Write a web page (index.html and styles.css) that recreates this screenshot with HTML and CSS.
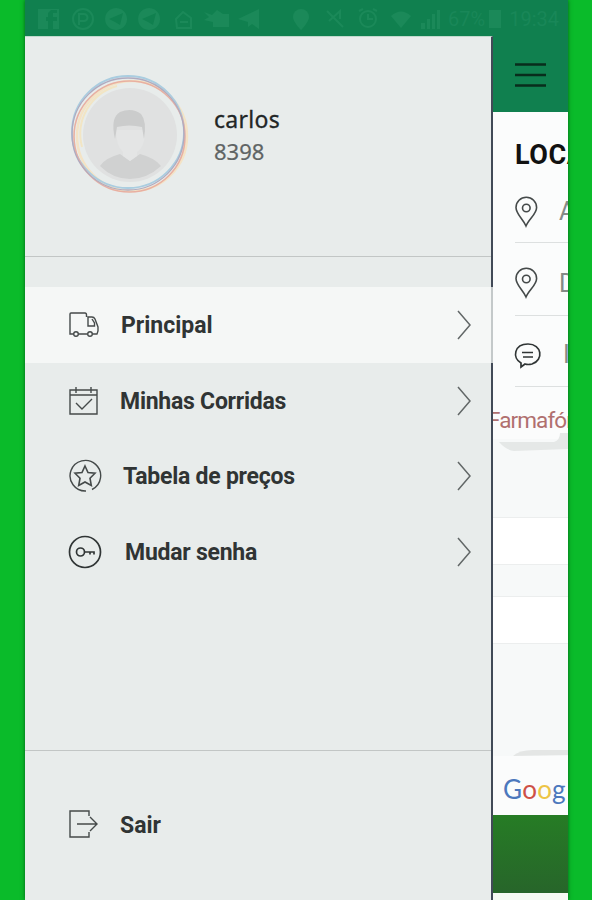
FILE: index.html
```html
<!DOCTYPE html>
<html lang="pt-BR">

<head>
    <meta charset="utf-8">
    <title>Principal</title>
    <link rel="stylesheet" href="styles.css">
</head>

<body>
    <div class="phone">
        <div class="status-bar">
            <svg class="status-icons" width="226" height="24" viewBox="0 0 226 24">
                <path d="M0 2h21v20h-6v-8h4v-4h-4V6h4V3h-6l-3 3v4H8v4h2v8H0z" />
                <circle class="ring" cx="45" cy="12" r="10" />
                <path class="ring" d="M41 18V7h5a3 3 0 0 1 0 7h-4" />
                <path fill-rule="evenodd" d="M78 1a11 11 0 1 0 .1 0zM71 12l14-6-3 12-5-3z" />
                <path fill-rule="evenodd" d="M111 1a11 11 0 1 0 .1 0zM104 12l14-6-3 12-5-3z" />
                <path class="ring" d="M138 12l7-7 8 6v10h-14zM142 15h8" />
                <path d="M166 5l8 3 5-5 6 4h6v13h-16v-5l-9-2 5-3z" />
                <path d="M200 12l21-10v20l-7-5-4 3v-5z" />
            </svg>
            <div class="status-right">
                <svg class="status-icons status-icons-right" width="150" height="24" viewBox="0 0 150 24">
                    <path d="M3 2a8 8 0 0 0-8 8c0 5 8 13 8 13s8-8 8-13a8 8 0 0 0-8-8z" />
                    <path class="ring" d="M29 4l16 16M31 14l11-10v8" />
                    <circle class="ring" cx="70" cy="12" r="8" />
                    <path class="ring" d="M61 4l4-2M79 4l-4-2M70 7v5h5" />
                    <path d="M93 9q10-9 20 0l-10 12z" />
                    <path d="M123 16h4v6h-4zM129 12h3v10h-3zM134 7h3v15h-3zM139 3h3v19h-3z" />
                </svg>
                <span>67%</span>
                <span class="battery"></span>
                <span>19:34</span>
            </div>
        </div>

        <div class="screen">
            <nav class="drawer">
                <div class="profile">
                    <svg class="avatar" width="124" height="124" viewBox="0 0 124 124">
                        <circle cx="63" cy="62" r="47" fill="#e0e1e1" />
                        <path d="M33 93q5-8 20-12l10 7 10-7q15 4 21 12-14 13-31 13T33 93z" fill="#d0d1d1" />
                        <path d="M49 57q0 16 7 22v4l7 5 7-5v-4q8-5 8-22z" fill="#e4e5e5" />
                        <path d="M48 66q-5-21 5-27 12-5 21 2 6 7 3 25l-2-12q-13-3-25 0z" fill="#cbcccc" />
                        <circle cx="65" cy="63" r="55" fill="none" stroke="#f4e3c5" stroke-width="2.5" />
                        <circle cx="61" cy="59" r="56" fill="none" stroke="#aacde0" stroke-width="1.8" />
                        <circle cx="62.500" cy="63.500" r="55.500" fill="none" stroke="#e8b0a2" stroke-width="1.6" />
                        <circle cx="61" cy="61" r="56" fill="none" stroke="#b0abc0" stroke-width="1.300" />
                        <path d="M15 74a50 50 0 0 1 35-61" fill="none" stroke="#f2e5c4" stroke-width="2" />
                    </svg>
                    <div class="profile-text">
                        <div class="name">carlos</div>
                        <div class="number">8398</div>
                    </div>
                </div>

                <ul class="menu">
                    <li class="menu-item active">
                        <svg class="icon" width="34" height="34" viewBox="0 0 34 34">
                            <path d="M5.500 26H2V6q0-1 1-1h14q1.500 0 1.500 2v2M10.500 26h9M24.500 26H29q1.500-3 1-7l-3-8q-1-2-3-2h-4v9h6.500v-3L24 11" />
                            <circle cx="8" cy="26" r="2.300" />
                            <circle cx="22" cy="26" r="2.300" />
                        </svg>
                        <span class="label label-principal">Principal</span>
                        <svg class="chevron" width="16" height="32" viewBox="0 0 16 32"><path d="M2 2l12 14L2 30" /></svg>
                    </li>
                    <li class="menu-item">
                        <svg class="icon" width="34" height="34" viewBox="0 0 34 34">
                            <path d="M2 6h27v24H2zM2 11h27M8 3v6M23 3v6M8 19l6 6 10-10" />
                        </svg>
                        <span class="label label-corridas">Minhas Corridas</span>
                        <svg class="chevron" width="16" height="32" viewBox="0 0 16 32"><path d="M2 2l12 14L2 30" /></svg>
                    </li>
                    <li class="menu-item">
                        <svg class="icon" width="34" height="34" viewBox="0 0 34 34">
                            <path d="M18 32A15.300 15.300 0 1 1 24 30.500" />
                            <path class="star" d="M17 7l3 6.500 7 .7-5 5 1.300 7.300-6.300-3.500-6.300 3.500 1.300-7.300-5-5 7-.7z" />
                        </svg>
                        <span class="label label-precos">Tabela de preços</span>
                        <svg class="chevron" width="16" height="32" viewBox="0 0 16 32"><path d="M2 2l12 14L2 30" /></svg>
                    </li>
                    <li class="menu-item">
                        <svg class="icon" width="34" height="34" viewBox="0 0 34 34">
                            <circle class="bold" cx="17" cy="17" r="15.500" />
                            <circle class="bold" cx="12.500" cy="17" r="4" />
                            <path class="bold" d="M17 17h9v2.500M22 17v2.500" />
                        </svg>
                        <span class="label label-senha">Mudar senha</span>
                        <svg class="chevron" width="16" height="32" viewBox="0 0 16 32"><path d="M2 2l12 14L2 30" /></svg>
                    </li>
                </ul>

                <div class="logout">
                    <svg class="icon" width="34" height="34" viewBox="0 0 34 34">
                        <path d="M21 8V3H2v26h19v-5M9 16h20M22 9l7 7-7 7" />
                    </svg>
                    <span class="label label-sair">Sair</span>
                </div>
            </nav>

            <main class="page">
                <div class="toolbar">
                    <svg width="34" height="28" viewBox="0 0 34 28">
                        <path d="M1 3.500h31M1 14h31M1 24.500h31" stroke="#082d1c" stroke-width="2.500" />
                    </svg>
                </div>
                <h1>LOCAIS</h1>
                <div class="field">
                    <svg class="pin" width="26" height="32" viewBox="0 0 26 32">
                        <path d="M12 30C9 23 2 18 2 11.500a10.300 10.300 0 0 1 20.600 0C22.600 18 15 23 12 30z" />
                        <circle cx="12.300" cy="12" r="3.800" />
                    </svg>
                    <span>A</span>
                </div>
                <div class="field">
                    <svg class="pin" width="26" height="32" viewBox="0 0 26 32">
                        <path d="M12 30C9 23 2 18 2 11.500a10.300 10.300 0 0 1 20.600 0C22.600 18 15 23 12 30z" />
                        <circle cx="12.300" cy="12" r="3.800" />
                    </svg>
                    <span>D</span>
                </div>
                <div class="field field-note">
                    <svg class="pin" width="28" height="30" viewBox="0 0 28 30">
                        <path class="bold" d="M7 27v-4C-2 18 0 4 14 4s16 16 4 20q-4 1-7 0z" />
                        <path class="bold" d="M8 12.500h11M9 17h10" />
                    </svg>
                    <span>I</span>
                </div>
                <div class="map">
                    <div class="place">Farmafórmula</div>
                    <svg class="road" width="75" height="20" viewBox="0 0 75 20">
                        <path d="M6 3h55q6-2 6-9h8v16l-54 2q-8-1-15-9z" fill="#e5e8e7" />
                    </svg>
                    <div class="strip strip-first"></div>
                    <div class="strip"></div>
                    <svg class="road-low" width="75" height="7" viewBox="0 0 75 7">
                        <path d="M20 7q6-6 20-6h35v5z" fill="#e4e6e5" />
                    </svg>
                    <div class="google"><i class="blue">G</i><i class="red">o</i><i class="yellow">o</i><i class="blue">g</i></div>
                </div>
                <div class="confirm"></div>
            </main>
        </div>
    </div>
</body>

</html>
```
FILE: styles.css
```css
* {
    box-sizing: border-box;
}

body {
    margin: 0;
    height: 900px;
    overflow: hidden;
    background: #0abb2a;
    font-family: Roboto, "Liberation Sans", sans-serif;
}

.phone {
    display: flex;
    flex-direction: column;
    width: 543px;
    height: 900px;
    margin-left: 25px;
    background: #10804f;
    box-shadow: 0 0 4px rgba(0, 70, 20, 0.8);
}

.status-bar {
    display: flex;
    justify-content: space-between;
    flex: none;
    height: 36px;
    padding: 7px 9px 0 13px;
    color: #198758;
    font-size: 20px;
    line-height: 24px;
}

.status-icons {
    flex: none;
    overflow: visible;
    fill: #1b8959;
}

.status-icons .ring {
    fill: none;
    stroke: #1b8959;
    stroke-width: 2;
}

.status-right {
    display: flex;
    align-items: center;
    height: 24px;
}

.battery {
    width: 12px;
    height: 18px;
    margin: 0 8px 0 4px;
    background: #1b8959;
}

.screen {
    display: flex;
    flex: 1;
    min-height: 0;
}

.drawer {
    flex: none;
    width: 468px;
    border-top: 1px solid #c0d9cd;
    border-right: 2px solid #414a57;
    background: #e8eceb;
}

.profile {
    display: flex;
    height: 220px;
    padding: 36px 0 0 42px;
    border-bottom: 1px solid #c2c6c5;
}

.profile-text {
    padding: 30px 0 0 23px;
    font-family: "Noto Sans", sans-serif;
    font-size: 23px;
    line-height: 32px;
}

.name {
    color: #222626;
    letter-spacing: 0.3px;
    -webkit-text-stroke: 0.3px #222626;
}

.number {
    color: #5f6464;
    font-size: 22px;
    -webkit-text-stroke: 0.2px #5f6464;
}

.menu {
    height: 494px;
    margin: 0;
    padding: 30px 0 0;
    border-bottom: 1px solid #c2c6c5;
    list-style: none;
}

.menu-item {
    display: flex;
    align-items: center;
    height: 75.5px;
    padding: 1px 20px 0 43px;
}

.menu-item.active {
    width: 468px;
    border-right: 2px solid #c4c9ca;
    background: #f5f7f6;
}

.icon {
    flex: none;
    fill: none;
    stroke: #454a4a;
    stroke-width: 1.4;
}

.star {
    stroke-width: 1.6;
}

.bold {
    stroke: #303535;
    stroke-width: 1.7;
}

.label {
    padding-top: 1px;
    color: #303434;
    font-size: 23px;
    font-weight: 700;
    letter-spacing: -0.25px;
    white-space: nowrap;
}

.label-principal {
    margin-left: 19px;
    letter-spacing: 0;
}

.label-corridas {
    margin-left: 18px;
}

.label-precos {
    margin-left: 21px;
}

.label-senha {
    margin-left: 23px;
}

.label-sair {
    margin-left: 18px;
    letter-spacing: 0;
}

.chevron {
    margin-left: auto;
    margin-right: -1px;
    fill: none;
    stroke: #626767;
    stroke-width: 1.5;
}

.logout {
    display: flex;
    align-items: center;
    height: 147px;
    padding-left: 43px;
}

.page {
    display: flex;
    flex-direction: column;
    width: 75px;
    overflow: hidden;
    background: #fbfcfc;
}

.toolbar {
    flex: none;
    height: 76px;
    padding: 25px 0 0 21px;
    background: #10804f;
}

h1 {
    flex: none;
    height: 67px;
    margin: 0;
    padding: 27px 0 0 22px;
    color: #111;
    font-size: 27px;
    line-height: 32px;
    letter-spacing: 0.6px;
}

.field {
    display: flex;
    align-items: center;
    flex: none;
    height: 64px;
    margin-left: 22px;
    padding-top: 2px;
    border-bottom: 1px solid #dde0e0;
    color: #858a88;
    font-size: 25px;
}

.field + .field {
    height: 73px;
    padding-top: 8px;
}

.field + .field-note {
    height: 71px;
    padding-top: 7px;
}

.pin {
    flex: none;
    margin-left: -1px;
    margin-right: 19px;
    fill: none;
    stroke: #454a4a;
    stroke-width: 1.6;
}

.field-note .pin {
    margin-right: 21px;
}

.map {
    flex: 1;
    background: #f7f9f9;
}

.place {
    height: 52px;
    margin-left: -5px;
    padding-top: 20px;
    background: #fbfcfc;
    color: #b0706f;
    font-size: 22.5px;
    line-height: 26px;
    letter-spacing: -0.9px;
}

.road,
.road-low {
    display: block;
}

.road {
    overflow: visible;
}

.strip {
    height: 48px;
    margin-bottom: 31px;
    border-top: 1px solid #eceeee;
    border-bottom: 1px solid #eceeee;
    background: #fff;
}

.strip-first {
    margin-top: 58px;
}

.road-low {
    margin-top: 105px;
}

.google {
    display: flex;
    height: 59px;
    padding: 17px 0 0 10px;
    background: #fbfcfc;
    font-family: Lato, sans-serif;
    font-size: 26px;
    line-height: 32px;
    letter-spacing: 0.2px;
}

.google i {
    font-style: normal;
}

.blue {
    color: #4c78bd;
}

.red {
    color: #ce5147;
}

.yellow {
    color: #edc546;
}

.confirm {
    flex: none;
    height: 85px;
    border-bottom: 7px solid #f5faf3;
    background: linear-gradient(#267c25, #27652a);
}
```
